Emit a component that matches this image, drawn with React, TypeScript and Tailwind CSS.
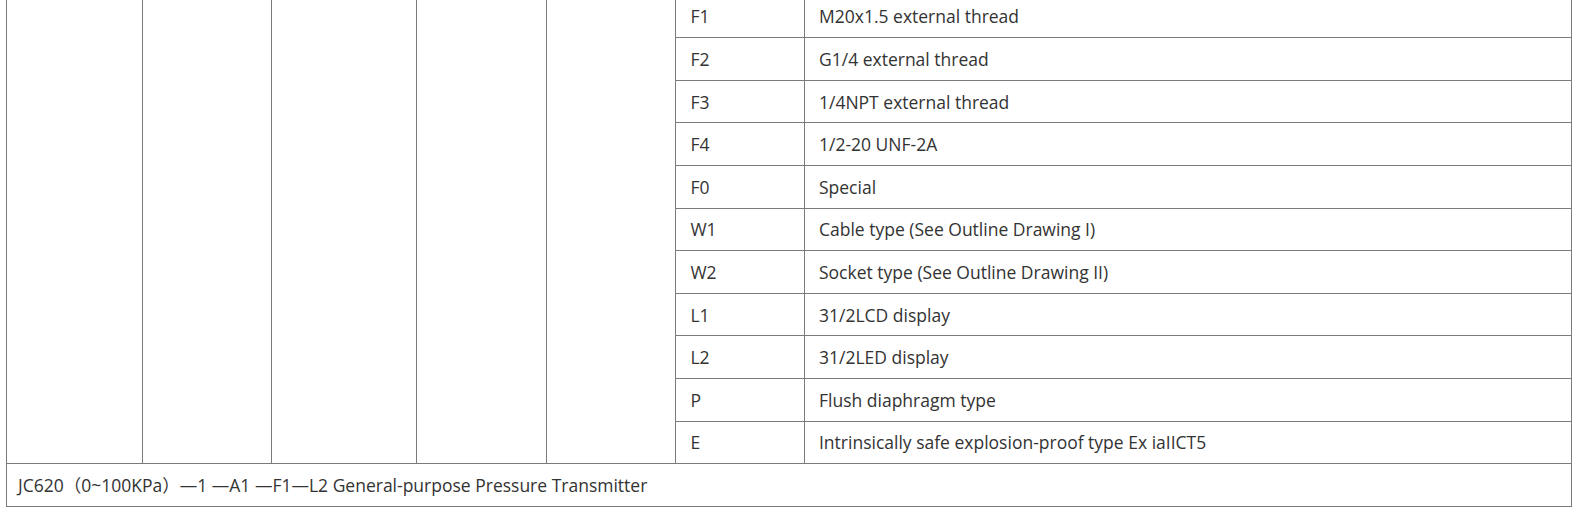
import React from 'react';

const OPTIONS = [
    { code: 'F1', desc: 'M20x1.5 external thread' },
    { code: 'F2', desc: 'G1/4 external thread' },
    { code: 'F3', desc: '1/4NPT external thread' },
    { code: 'F4', desc: '1/2-20 UNF-2A' },
    { code: 'F0', desc: 'Special' },
    { code: 'W1', desc: 'Cable type (See Outline Drawing I)' },
    { code: 'W2', desc: 'Socket type (See Outline Drawing II)' },
    { code: 'L1', desc: '31/2LCD display' },
    { code: 'L2', desc: '31/2LED display' },
    { code: 'P', desc: 'Flush diaphragm type' },
    { code: 'E', desc: 'Intrinsically safe explosion-proof type Ex iaIICT5' },
];

const cell = 'border border-[#7b7b7b] px-[14px] py-0 align-middle';

const App: React.FC = () => {
    return (
        <div className="w-[1578px] h-[513px] overflow-hidden bg-white px-[6px]">
            <table
                className="-mt-[5.4px] w-[1566px] table-fixed border-collapse text-[17.5px] leading-[24px] text-[#333333]"
                style={{ fontFamily: '"Open Sans", "Noto Sans CJK SC", sans-serif' }}
            >
                <colgroup>
                    <col className="w-[136px]" />
                    <col className="w-[129px]" />
                    <col className="w-[145px]" />
                    <col className="w-[130.4px]" />
                    <col className="w-[129px]" />
                    <col className="w-[128.6px]" />
                    <col />
                </colgroup>
                <tbody>
                    {OPTIONS.map((opt, i) => (
                        <tr key={opt.code} className="h-[42.6px]">
                            {i === 0 && (
                                <>
                                    <td rowSpan={OPTIONS.length} className={cell}></td>
                                    <td rowSpan={OPTIONS.length} className={cell}></td>
                                    <td rowSpan={OPTIONS.length} className={cell}></td>
                                    <td rowSpan={OPTIONS.length} className={cell}></td>
                                    <td rowSpan={OPTIONS.length} className={cell}></td>
                                </>
                            )}
                            <td className={cell}>{opt.code}</td>
                            <td className={cell}>{opt.desc}</td>
                        </tr>
                    ))}
                    <tr className="h-[42.4px]">
                        <td colSpan={7} className="border border-[#7b7b7b] pl-[11px] py-0 align-middle">
                            JC620（0~100KPa）—1 —A1 —F1—L2 General-purpose Pressure Transmitter
                        </td>
                    </tr>
                </tbody>
            </table>
        </div>
    );
};

export default App;
